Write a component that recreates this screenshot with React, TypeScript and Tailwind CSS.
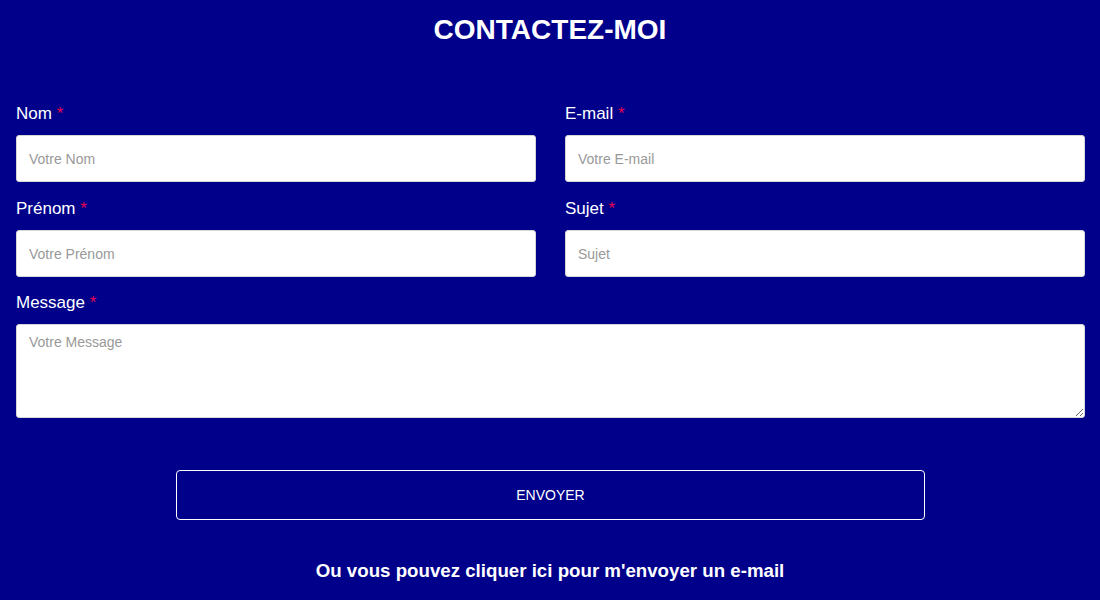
const fields = [
  { label: "Nom", placeholder: "Votre Nom", row: "" },
  { label: "E-mail", placeholder: "Votre E-mail", row: "" },
  { label: "Prénom", placeholder: "Votre Prénom", row: "mt-px" },
  { label: "Sujet", placeholder: "Sujet", row: "mt-px" },
];

const Label = ({ text }: { text: string }) => (
  <label className="mb-[10px] block h-[22px] text-[17px] leading-[22px] text-white">
    {text} <span className="text-[#e3004f]">*</span>
  </label>
);

export default function App() {
  return (
    <div className="min-h-[600px] w-full bg-[#00008b] font-['Liberation_Sans',Arial,sans-serif]">
      <h1 className="pt-[14px] text-center text-[28px] font-bold leading-8 text-white">
        CONTACTEZ-MOI
      </h1>

      <form className="pl-4 pr-[15px] pt-[57px]">
        <div className="grid grid-cols-2 gap-x-[29px] gap-y-[15px]">
          {fields.map((f) => (
            <div key={f.label} className={f.row}>
              <Label text={f.label} />
              <input
                type="text"
                placeholder={f.placeholder}
                className="block h-[47px] w-full rounded-[3px] border border-[#d5d5d5] bg-white px-3 text-[14px] text-gray-800 outline-none placeholder:text-[#999]"
              />
            </div>
          ))}
          <div className="col-span-2">
            <Label text="Message" />
            <textarea
              placeholder="Votre Message"
              className="block h-[94px] w-full rounded-[3px] border border-[#d5d5d5] bg-white px-3 py-[7px] text-[14px] text-gray-800 outline-none placeholder:text-[#999]"
            />
          </div>
        </div>

        <button
          type="button"
          className="mx-auto mt-[52px] block h-[50px] w-[70%] rounded-[4px] border border-white bg-transparent text-[14px] text-white"
        >
          ENVOYER
        </button>
      </form>

      <p className="pt-[39px] pb-4 text-center text-[18.7px] font-bold leading-6 text-white">
        Ou vous pouvez cliquer ici pour m'envoyer un e-mail
      </p>
    </div>
  );
}
